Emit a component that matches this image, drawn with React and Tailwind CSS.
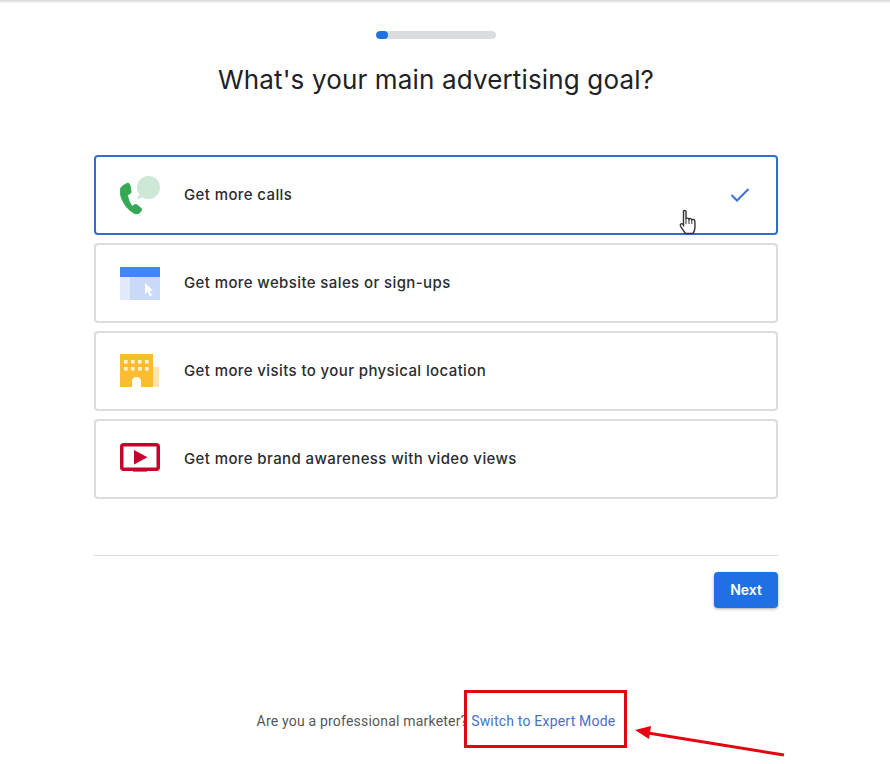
const PhoneIcon = () => (
  <svg width="40" height="40" viewBox="0 0 40 40">
    <circle cx="28.5" cy="12.5" r="11.5" fill="#cde8d6" />
    <path d="M19 19 L17 25 L23 22 Z" fill="#cde8d6" />
    <path d="M7 8.4 L2.8 10.8 C-0.6 13.3 -0.2 18 1.4 22.6 C3.6 29 8.4 35.4 14.6 38.4 C16.8 39.2 18.8 38.6 20.2 37.2 L21 36 C21.8 34.8 21.6 33.6 20.6 32.8 L16.8 29.8 C15.8 29.2 14.8 29.4 14 30.2 L12.6 31.4 C9.6 28.6 7.8 24 7.6 19.6 L9.6 18.8 C10.6 18.4 11.2 17.4 11 16.2 L9.8 9.8 C9.6 8.6 8.2 7.8 7 8.4 Z" fill="#34a853" stroke="#34a853" strokeWidth="1" />
  </svg>
);

const BrowserIcon = () => (
  <svg width="40" height="36" viewBox="0 0 40 36">
    <rect y="2" width="40" height="10" fill="#4285f4" />
    <rect y="12" width="10" height="23" fill="#e1eafa" />
    <rect x="10" y="12" width="30" height="23" fill="#c9daf8" />
    <path d="M25 18 L25 29 L27.6 26.8 L30 31.5 L32 30.5 L29.8 26 L33 25.6 Z" fill="#fff" />
  </svg>
);

const BuildingIcon = () => {
  const windows = [];
  for (const y of [7, 14]) {
    for (const x of [4, 11, 18, 25]) {
      windows.push(<rect key={`${x}-${y}`} x={x} y={y} width="3.6" height="3.6" fill="#fff3d0" />);
    }
  }
  return (
    <svg width="40" height="36" viewBox="0 0 40 36">
      <rect x="33" y="14" width="6" height="20" fill="#fde6a8" />
      <rect y="1" width="33" height="33" fill="#fbbc32" />
      {windows}
      <path d="M12 34 L12 28 C12 25.4 14 24 16.5 24 C19 24 21 25.4 21 28 L21 34 Z" fill="#fff" />
    </svg>
  );
};

const VideoIcon = () => (
  <svg width="40" height="32" viewBox="0 0 40 32">
    <rect x="1.75" y="1.75" width="36.5" height="24.5" rx="2" fill="#fff" stroke="#c5032b" strokeWidth="3.5" />
    <path d="M14 7 L14 21.5 L27.5 14.2 Z" fill="#c5032b" />
    <rect x="13" y="28" width="14" height="1" fill="#d9667f" />
  </svg>
);

const goals = [
  { label: 'Get more calls', icon: <PhoneIcon />, selected: true },
  { label: 'Get more website sales or sign-ups', icon: <BrowserIcon /> },
  { label: 'Get more visits to your physical location', icon: <BuildingIcon /> },
  { label: 'Get more brand awareness with video views', icon: <VideoIcon /> },
];

const GoalCard = ({ label, icon, selected }) => (
  <div
    className={`flex h-20 items-center rounded border-2 bg-white pl-6 pr-[26px] ${
      selected ? 'border-[#2f6fcb]' : 'border-[#dcdcdc]'
    }`}
  >
    <div className="flex w-10 justify-center">{icon}</div>
    <span className="ml-6 flex-1 text-[15px] font-medium tracking-[0.39px] text-[#2a2c2f]">{label}</span>
    {selected && (
      <svg width="20" height="16" viewBox="0 0 20 16" fill="none" stroke="#3a70cf" strokeWidth="2">
        <path d="M1.5 8 L7 13.5 L18.5 2" />
      </svg>
    )}
  </div>
);

const App = () => {
  return (
    <div className="relative h-[764px] w-[890px] overflow-hidden bg-white font-['Inter',sans-serif]">
      <div className="h-[3px] bg-gradient-to-b from-[#d8d8d8] to-[#f6f6f6]" />

      <div className="w-[872px]">
        <div className="mx-auto mt-7 h-2 w-[120px] overflow-hidden rounded-full bg-[#dadce0]">
          <div className="h-2 w-3 rounded-full bg-[#1f71e3]" />
        </div>

        <h1 className="mt-[21px] text-center text-[26px] leading-10 font-normal tracking-[0.15px] text-[#202124]">
          What's your main advertising goal?
        </h1>

        <div className="mx-auto mt-[55px] flex w-[684px] flex-col gap-2">
          {goals.map((goal) => (
            <GoalCard key={goal.label} {...goal} />
          ))}
        </div>

        <div className="mx-auto mt-14 w-[684px] border-t border-[#dadce0] pt-4">
          <div className="flex justify-end">
            <button className="h-9 w-16 rounded bg-[#1f71e3] text-sm font-semibold text-white shadow-[0_1px_3px_rgba(60,64,67,0.45)]">
              Next
            </button>
          </div>
        </div>

        <p className="mt-[103px] text-center font-['Roboto',sans-serif] text-sm leading-5 tracking-[0.2px] text-[#555759]">
          Are you a professional marketer?{' '}
          <a className="text-[#4a6fc9]">Switch to Expert Mode</a>
        </p>
      </div>

      {/* hand cursor over the first card */}
      <svg className="absolute top-[209px] left-[679px]" width="18" height="26" viewBox="0 0 18 26">
        <path
          d="M4.5 2.5 C4.5 1 7 1 7 2.5 L7 10 C7.6 8.8 9.6 8.8 10 10.2 C10.6 9.2 12.4 9.4 12.8 10.8 C13.6 10 15.6 10.4 15.8 12 L16 18 C16 21 15 23 14 24.5 L6.5 24.5 C5 22.5 3 20 1.4 16.8 C0.8 15.4 2.4 14 3.6 15 L4.5 16.2 Z"
          fill="#fff"
          stroke="#333"
          strokeWidth="1.4"
        />
        <path d="M7 10 L7 15 M10 10.2 L10 15 M12.8 10.8 L12.8 15" stroke="#333" strokeWidth="1" />
      </svg>

      {/* annotation over the link */}
      <div className="absolute top-[690px] left-[464px] h-[58px] w-[163px] border-[3px] border-[#e3060f]" />
      <svg className="absolute top-[720px] left-[630px]" width="160" height="40" viewBox="0 0 160 40">
        <path d="M154 35 L18 13" stroke="#e3060f" strokeWidth="3" />
        <path d="M5 10 L21 6 L19 19 Z" fill="#e3060f" />
      </svg>
    </div>
  );
};

export default App;
